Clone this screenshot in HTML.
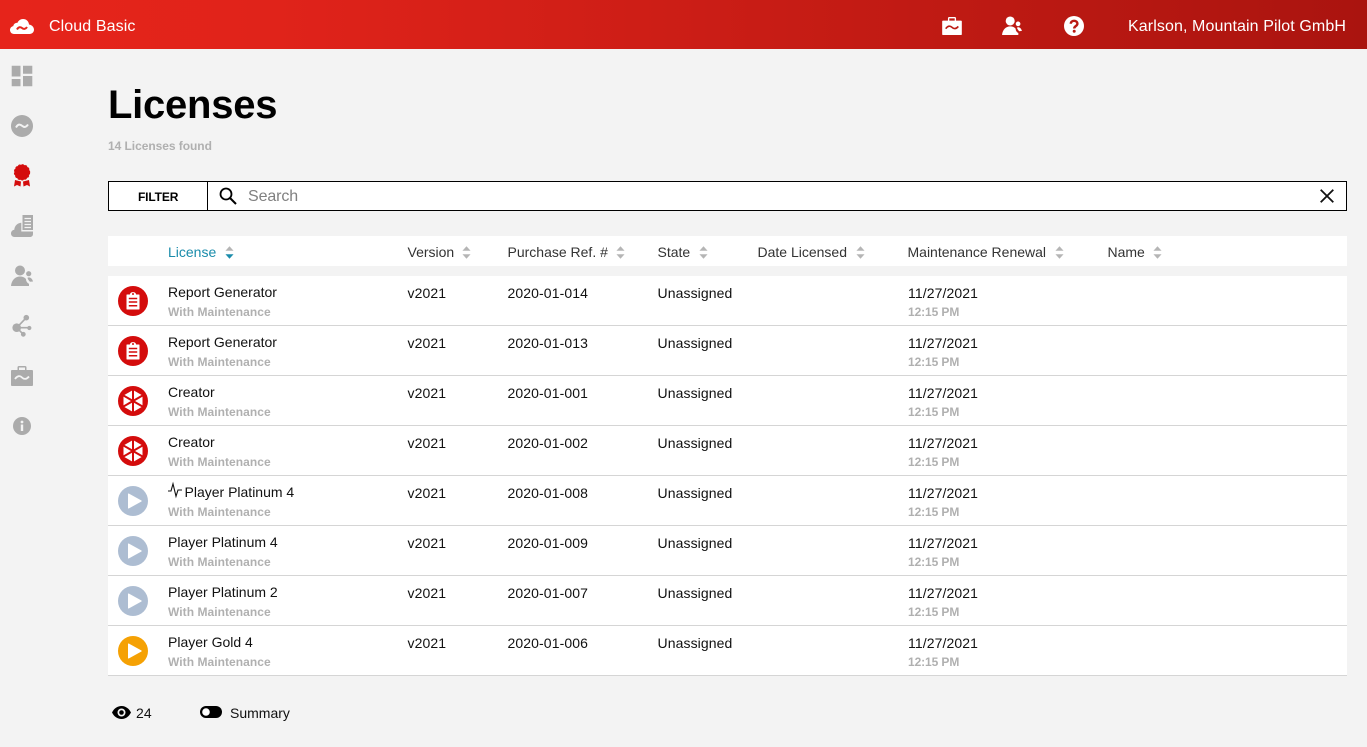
<!DOCTYPE html>
<html lang="en">
<head>
<meta charset="utf-8">
<title>Licenses</title>
<style>
html,body{margin:0;padding:0;width:1367px;height:747px;overflow:hidden;background:#f3f3f3;font-family:"Liberation Sans",Arial,sans-serif;color:#111;}
.a{position:absolute;white-space:nowrap;}
svg{position:absolute;display:block;overflow:visible;}
#top{position:absolute;left:0;top:0;width:1367px;height:49px;background:linear-gradient(90deg,#e6241b 0%,#e0231a 20%,#aa140f 100%);}
.row{position:absolute;left:108px;width:1239px;height:49px;background:#fff;border-bottom:1px solid #d5d5d5;}
.t{position:absolute;font-size:14px;line-height:16px;white-space:nowrap;color:#111;letter-spacing:.1px;}
.n{position:absolute;left:168px;font-size:14px;line-height:16px;white-space:nowrap;color:#111;}
.s{position:absolute;font-size:12px;line-height:14px;font-weight:bold;color:#b0b0b0;white-space:nowrap;letter-spacing:.05px;}
.d{letter-spacing:-.1px;}
.h{position:absolute;top:244px;font-size:14px;line-height:16px;color:#333;white-space:nowrap;}
</style>
</head>
<body>
<svg width="0" height="0" style="position:absolute">
<defs>
<symbol id="clip" viewBox="0 0 30 30"><circle cx="15" cy="15" r="15" fill="#d40c0c"/><path d="M9 9H12.300C12.300 5.800 17.700 5.800 17.700 9H21V23H9Z" fill="#fff" stroke="#fff" stroke-linejoin="round"/><circle cx="15" cy="8" r="1" fill="#d40c0c"/><path d="M10.800 12.500H19.200M10.800 16H19.200M10.800 19.700H19.200" stroke="#d40c0c" stroke-width="1.500"/></symbol>
<symbol id="wheel" viewBox="0 0 30 30"><circle cx="15" cy="15" r="15" fill="#d40c0c"/><path d="M15 4L24.500 9.500V20.500L15 26L5.500 20.500V9.500Z" fill="#fff"/><path d="M15 3V27M4.600 9L25.400 21M25.400 9L4.600 21" stroke="#d40c0c" stroke-width="2"/></symbol>
<symbol id="play" viewBox="0 0 30 30"><circle cx="15" cy="15" r="15" fill="currentColor"/><path d="M10.500 8L23.200 15L10.500 22Z" fill="#fff" stroke="#fff" stroke-width="1" stroke-linejoin="round"/></symbol>
<symbol id="people" viewBox="0 0 22 21"><circle cx="9" cy="5.500" r="5" fill="currentColor"/><circle cx="17.700" cy="8.700" r="2.600" fill="currentColor"/><path d="M0 21C.5 15 4.500 11.500 9 11.500C11.500 11.500 13.500 12.300 15 14C15 16.500 16.500 18 18 18.800V21Z" fill="currentColor"/><path d="M16.500 12.800C18.500 11.700 21 13 22 16.500L19 16.800C18 15.800 16.800 14.500 16.500 12.800Z" fill="currentColor"/></symbol>
<symbol id="case" viewBox="0 0 22 20"><path fill-rule="evenodd" d="M1 4H6.500V1.500C6.500 .5 7 0 8 0H14C15 0 15.500 .5 15.500 1.500V4H21C21.600 4 22 4.400 22 5V19C22 19.600 21.600 20 21 20H1C.4 20 0 19.600 0 19V5C0 4.400 .4 4 1 4ZM8 1.500V4H14V1.500Z" fill="currentColor"/><path d="M4 13C6.500 9.500 9 9.500 11 11.500C13 13.500 15.500 13.500 18 10.500" fill="none" stroke="var(--w)" stroke-width="1.800"/></symbol>
<symbol id="sort" viewBox="0 0 10 14"><path d="M5 0L9.500 5H.5Z" fill="#b5b5b5"/><path d="M.5 9H9.500L5 14Z" fill="#b5b5b5"/></symbol>
</defs>
</svg>

<div id="top"></div>
<svg style="left:10px;top:18px" width="24" height="16" viewBox="0 0 24 16"><path d="M4 16C1.800 16 0 14.200 0 12C0 10 1.400 8.400 3.300 8.100C3.600 6 5.400 4.600 7.400 4.900C8.500 2.400 10.600 1 13 1C16.300 1 18.800 3.400 19 6.500C21.800 7 24 9 24 11.800C24 14.200 22 16 19.600 16Z" fill="#fff"/><path d="M7 11.500C8.500 8.800 10.500 8.800 12 10C13.500 11.300 15.500 11.300 17 9" fill="none" stroke="#e6251b" stroke-width="2"/></svg>
<div class="a" style="left:49px;top:17px;font-size:16px;line-height:19px;color:#fff;letter-spacing:.1px;">Cloud Basic</div>
<svg style="left:942px;top:17px;color:#fff;--w:#bc1b14" width="20" height="18" viewBox="0 0 22 20"><use href="#case" width="22" height="20"/></svg>
<svg style="left:1002px;top:16px;color:#fff" width="20" height="19" viewBox="0 0 22 21"><use href="#people" width="22" height="21"/></svg>
<svg style="left:1064px;top:16px" width="20" height="20" viewBox="0 0 20 20"><circle cx="10" cy="10" r="10" fill="#fff"/><path d="M6.800 7.800C6.800 3.800 13.400 3.800 13.400 7.700C13.400 10 10.200 10 10.200 12.500" fill="none" stroke="#b91a13" stroke-width="2.400"/><circle cx="10.200" cy="15.300" r="1.500" fill="#b91a13"/></svg>
<div class="a" style="left:1128px;top:17px;font-size:16px;line-height:19px;color:#fff;letter-spacing:.1px;">Karlson, Mountain Pilot GmbH</div>

<!-- sidebar -->
<svg style="left:11px;top:65px" width="22" height="22" viewBox="0 0 22 22"><path d="M.7 .7H9.500V11.500H.7ZM12 .7H21.300V8.700H12ZM.7 14H9.500V21.300H.7ZM12 11H21.300V21.300H12Z" fill="#ababab"/></svg>
<svg style="left:11px;top:115px" width="22" height="22" viewBox="0 0 22 22"><circle cx="11" cy="11" r="11" fill="#ababab"/><path d="M5 12.500C7 9 9 9 11 10.800C13 12.500 15 12.500 17 9.500" fill="none" stroke="#f3f3f3" stroke-width="2"/></svg>
<svg style="left:13px;top:164px" width="18" height="23" viewBox="0 0 18 23"><path d="M2 16L1 22.500L4 21L7.500 22.500L8 17.500ZM16 16L17 22.500L14 21L10.500 22.500L10 17.500Z" fill="#d40c0c"/><circle cx="9" cy="8.300" r="7.700" fill="#d40c0c"/><circle cx="9" cy="8.300" r="7.800" fill="none" stroke="#d40c0c" stroke-width=".7" stroke-dasharray="2 1.630"/></svg>
<svg style="left:11px;top:215px" width="22" height="22" viewBox="0 0 22 22"><path d="M11.500 0H22V15H11.500Z" fill="#ababab"/><path d="M13.500 3.500H20M13.500 6.500H20M13.500 9.500H20M13.500 12.500H20" stroke="#f3f3f3" stroke-width="1.200"/><path d="M3.500 22C1.500 22 0 20.500 0 18.500C0 16.500 1.500 15 3.300 14.800C3.500 11 6.500 8 10.300 7.800V16.500H22V19C22 20.800 20.800 22 19 22Z" fill="#ababab"/></svg>
<svg style="left:11px;top:265px;color:#ababab" width="22" height="21" viewBox="0 0 22 21"><use href="#people" width="22" height="21"/></svg>
<svg style="left:12px;top:315px" width="20" height="22" viewBox="0 0 20 22"><path d="M4.700 12.700L14.300 2.700M4.700 12.700H17.300M4.700 12.700L11.300 19.300" stroke="#ababab" stroke-width="1.700"/><circle cx="4.700" cy="12.700" r="4.300" fill="#ababab"/><circle cx="14.300" cy="2.700" r="2.800" fill="#ababab"/><circle cx="17.300" cy="13" r="2.100" fill="#ababab"/><circle cx="11.300" cy="19.300" r="2.400" fill="#ababab"/></svg>
<svg style="left:11px;top:366px;color:#ababab;--w:#f3f3f3" width="22" height="20" viewBox="0 0 22 20"><use href="#case" width="22" height="20"/></svg>
<svg style="left:13px;top:417px" width="18" height="18" viewBox="0 0 18 18"><circle cx="9" cy="9" r="9" fill="#ababab"/><circle cx="9" cy="5" r="1.400" fill="#f3f3f3"/><rect x="7.800" y="7.500" width="2.400" height="6.500" fill="#f3f3f3"/></svg>

<!-- title -->
<div class="a" style="left:108px;top:82px;font-size:40px;line-height:46px;font-weight:bold;color:#000;letter-spacing:-.25px;">Licenses</div>
<div class="a" style="left:108px;top:139px;font-size:12px;line-height:14px;font-weight:bold;color:#b0b0b0;letter-spacing:-.05px;">14 Licenses found</div>

<!-- search -->
<div style="position:absolute;left:108px;top:181px;width:1237px;height:28px;background:#fff;border:1px solid #000;"></div>
<div style="position:absolute;left:207px;top:181px;width:1px;height:30px;background:#000;"></div>
<div class="a" style="left:138px;top:190px;font-size:12px;line-height:14px;font-weight:bold;color:#000;letter-spacing:-.15px;">FILTER</div>
<svg style="left:219px;top:187px" width="18" height="18" viewBox="0 0 18 18"><circle cx="7" cy="7" r="5.500" fill="none" stroke="#000" stroke-width="1.800"/><path d="M11 11L17 17" stroke="#000" stroke-width="2"/></svg>
<div class="a" style="left:248px;top:187px;font-size:16px;line-height:19px;color:#808080;letter-spacing:-.1px;">Search</div>
<svg style="left:1320px;top:189px" width="14" height="14" viewBox="0 0 14 14"><path d="M.7 .7L13.300 13.300M13.300 .7L.7 13.300" stroke="#111" stroke-width="1.800"/></svg>

<!-- table header -->
<div style="position:absolute;left:108px;top:236px;width:1239px;height:30px;background:#fff;"></div>
<div class="h" style="left:168px;color:#1a8cab;">License</div>
<svg style="left:225px;top:246px" width="9" height="13" viewBox="0 0 10 14"><path d="M5 0L9.500 5H.5Z" fill="#b5b5b5"/><path d="M.5 9H9.500L5 14Z" fill="#1a8cab"/></svg>
<div class="h" style="left:407.500px;">Version</div>
<svg style="left:462px;top:246px" width="9" height="13"><use href="#sort" width="9" height="13"/></svg>
<div class="h" style="left:507.500px;">Purchase Ref. #</div>
<svg style="left:616px;top:246px" width="9" height="13"><use href="#sort" width="9" height="13"/></svg>
<div class="h" style="left:657.500px;">State</div>
<svg style="left:699px;top:246px" width="9" height="13"><use href="#sort" width="9" height="13"/></svg>
<div class="h" style="left:757.500px;">Date Licensed</div>
<svg style="left:856px;top:246px" width="9" height="13"><use href="#sort" width="9" height="13"/></svg>
<div class="h" style="left:907.500px;">Maintenance Renewal</div>
<svg style="left:1055px;top:246px" width="9" height="13"><use href="#sort" width="9" height="13"/></svg>
<div class="h" style="left:1107.500px;">Name</div>
<svg style="left:1153px;top:246px" width="9" height="13"><use href="#sort" width="9" height="13"/></svg>

<!-- rows -->
<div class="row" style="top:276px"></div>
<svg style="left:118px;top:286px" width="30" height="30"><use href="#clip" width="30" height="30"/></svg>
<div class="n" style="top:284px">Report Generator</div><div class="s" style="left:168px;top:305px">With Maintenance</div>
<div class="t" style="left:407.500px;top:285px">v2021</div><div class="t" style="left:507.500px;top:285px">2020-01-014</div><div class="t" style="left:657.500px;top:285px">Unassigned</div><div class="t" style="left:908px;top:285px">11/27/2021</div><div class="s d" style="left:908px;top:305px">12:15 PM</div>

<div class="row" style="top:326px"></div>
<svg style="left:118px;top:336px" width="30" height="30"><use href="#clip" width="30" height="30"/></svg>
<div class="n" style="top:334px">Report Generator</div><div class="s" style="left:168px;top:355px">With Maintenance</div>
<div class="t" style="left:407.500px;top:335px">v2021</div><div class="t" style="left:507.500px;top:335px">2020-01-013</div><div class="t" style="left:657.500px;top:335px">Unassigned</div><div class="t" style="left:908px;top:335px">11/27/2021</div><div class="s d" style="left:908px;top:355px">12:15 PM</div>

<div class="row" style="top:376px"></div>
<svg style="left:118px;top:386px" width="30" height="30"><use href="#wheel" width="30" height="30"/></svg>
<div class="n" style="top:384px">Creator</div><div class="s" style="left:168px;top:405px">With Maintenance</div>
<div class="t" style="left:407.500px;top:385px">v2021</div><div class="t" style="left:507.500px;top:385px">2020-01-001</div><div class="t" style="left:657.500px;top:385px">Unassigned</div><div class="t" style="left:908px;top:385px">11/27/2021</div><div class="s d" style="left:908px;top:405px">12:15 PM</div>

<div class="row" style="top:426px"></div>
<svg style="left:118px;top:436px" width="30" height="30"><use href="#wheel" width="30" height="30"/></svg>
<div class="n" style="top:434px">Creator</div><div class="s" style="left:168px;top:455px">With Maintenance</div>
<div class="t" style="left:407.500px;top:435px">v2021</div><div class="t" style="left:507.500px;top:435px">2020-01-002</div><div class="t" style="left:657.500px;top:435px">Unassigned</div><div class="t" style="left:908px;top:435px">11/27/2021</div><div class="s d" style="left:908px;top:455px">12:15 PM</div>

<div class="row" style="top:476px"></div>
<svg style="left:118px;top:486px;color:#adbdd2" width="30" height="30"><use href="#play" width="30" height="30"/></svg>
<svg style="left:168px;top:483px" width="14" height="14" viewBox="0 0 14 14"><path d="M0 8H3L5 .8L8 13.300L10 7H14" fill="none" stroke="#111" stroke-width="1.100"/></svg>
<div class="n" style="left:184.500px;top:484px">Player Platinum 4</div><div class="s" style="left:168px;top:505px">With Maintenance</div>
<div class="t" style="left:407.500px;top:485px">v2021</div><div class="t" style="left:507.500px;top:485px">2020-01-008</div><div class="t" style="left:657.500px;top:485px">Unassigned</div><div class="t" style="left:908px;top:485px">11/27/2021</div><div class="s d" style="left:908px;top:505px">12:15 PM</div>

<div class="row" style="top:526px"></div>
<svg style="left:118px;top:536px;color:#adbdd2" width="30" height="30"><use href="#play" width="30" height="30"/></svg>
<div class="n" style="top:534px">Player Platinum 4</div><div class="s" style="left:168px;top:555px">With Maintenance</div>
<div class="t" style="left:407.500px;top:535px">v2021</div><div class="t" style="left:507.500px;top:535px">2020-01-009</div><div class="t" style="left:657.500px;top:535px">Unassigned</div><div class="t" style="left:908px;top:535px">11/27/2021</div><div class="s d" style="left:908px;top:555px">12:15 PM</div>

<div class="row" style="top:576px"></div>
<svg style="left:118px;top:586px;color:#adbdd2" width="30" height="30"><use href="#play" width="30" height="30"/></svg>
<div class="n" style="top:584px">Player Platinum 2</div><div class="s" style="left:168px;top:605px">With Maintenance</div>
<div class="t" style="left:407.500px;top:585px">v2021</div><div class="t" style="left:507.500px;top:585px">2020-01-007</div><div class="t" style="left:657.500px;top:585px">Unassigned</div><div class="t" style="left:908px;top:585px">11/27/2021</div><div class="s d" style="left:908px;top:605px">12:15 PM</div>

<div class="row" style="top:626px"></div>
<svg style="left:118px;top:636px;color:#f5a104" width="30" height="30"><use href="#play" width="30" height="30"/></svg>
<div class="n" style="top:634px">Player Gold 4</div><div class="s" style="left:168px;top:655px">With Maintenance</div>
<div class="t" style="left:407.500px;top:635px">v2021</div><div class="t" style="left:507.500px;top:635px">2020-01-006</div><div class="t" style="left:657.500px;top:635px">Unassigned</div><div class="t" style="left:908px;top:635px">11/27/2021</div><div class="s d" style="left:908px;top:655px">12:15 PM</div>

<!-- footer -->
<svg style="left:112px;top:706px" width="19" height="13" viewBox="0 0 19 13"><path fill-rule="evenodd" d="M0 6.500C2 2.500 5.500 0 9.500 0C13.500 0 17 2.500 19 6.500C17 10.500 13.500 13 9.500 13C5.500 13 2 10.500 0 6.500ZM9.500 2.500A4 4 0 1 0 9.500 10.500A4 4 0 1 0 9.500 2.500Z" fill="#000"/><circle cx="9.500" cy="6.500" r="2.300" fill="#000"/></svg>
<div class="t" style="left:136px;top:705px">24</div>
<svg style="left:200px;top:706px" width="22" height="12" viewBox="0 0 22 12"><rect width="22" height="12" rx="6" fill="#000"/><circle cx="6" cy="6" r="3.800" fill="#fff"/></svg>
<div class="n" style="left:230px;top:705px">Summary</div>
</body>
</html>
